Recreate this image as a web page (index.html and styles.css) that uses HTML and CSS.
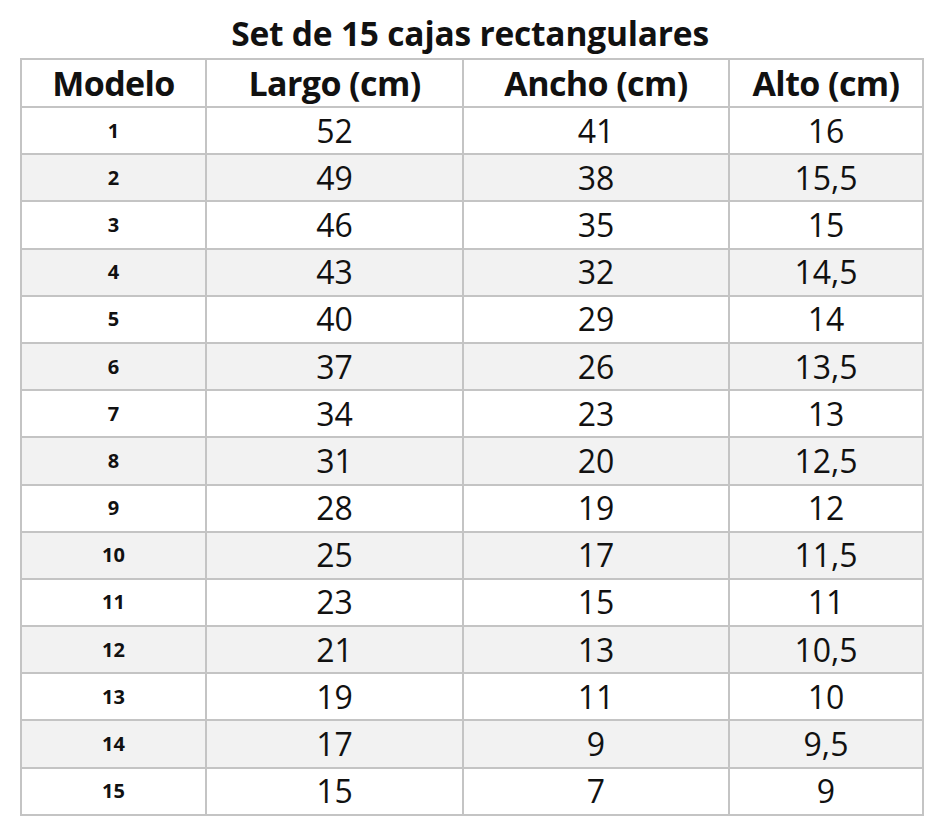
FILE: index.html
```html
<!DOCTYPE html>
<html lang="es">
<head>
<meta charset="utf-8">
<title>Set de 15 cajas rectangulares</title>
<link rel="stylesheet" href="styles.css">
</head>
<body>
<div class="page">
  <h1 class="title">Set de 15 cajas rectangulares</h1>
  <table class="sizes">
    <colgroup>
      <col class="c1"><col class="c2"><col class="c3"><col class="c4">
    </colgroup>
    <thead>
      <tr><th>Modelo</th><th>Largo (cm)</th><th>Ancho (cm)</th><th>Alto (cm)</th></tr>
    </thead>
    <tbody>
      <tr><td class="m">1</td><td>52</td><td>41</td><td>16</td></tr>
      <tr><td class="m">2</td><td>49</td><td>38</td><td>15,5</td></tr>
      <tr><td class="m">3</td><td>46</td><td>35</td><td>15</td></tr>
      <tr><td class="m">4</td><td>43</td><td>32</td><td>14,5</td></tr>
      <tr><td class="m">5</td><td>40</td><td>29</td><td>14</td></tr>
      <tr><td class="m">6</td><td>37</td><td>26</td><td>13,5</td></tr>
      <tr><td class="m">7</td><td>34</td><td>23</td><td>13</td></tr>
      <tr><td class="m">8</td><td>31</td><td>20</td><td>12,5</td></tr>
      <tr><td class="m">9</td><td>28</td><td>19</td><td>12</td></tr>
      <tr><td class="m">10</td><td>25</td><td>17</td><td>11,5</td></tr>
      <tr><td class="m">11</td><td>23</td><td>15</td><td>11</td></tr>
      <tr><td class="m">12</td><td>21</td><td>13</td><td>10,5</td></tr>
      <tr><td class="m">13</td><td>19</td><td>11</td><td>10</td></tr>
      <tr><td class="m">14</td><td>17</td><td>9</td><td>9,5</td></tr>
      <tr><td class="m">15</td><td>15</td><td>7</td><td>9</td></tr>
    </tbody>
  </table>
</div>
</body>
</html>
```
FILE: styles.css
```css
html, body {
  margin: 0;
  padding: 0;
  background: #ffffff;
}
.page {
  width: 940px;
  padding-top: 12px;
  font-family: "Open Sans", "Noto Sans", sans-serif;
  color: #111111;
}
.title {
  margin: 0;
  height: 46px;
  line-height: 42px;
  font-size: 33.5px;
  font-weight: 700;
  text-align: center;
  letter-spacing: -0.2px;
}
.sizes {
  margin-left: 20px;
  width: 902px;
  border-collapse: collapse;
  table-layout: fixed;
  border: 2px solid #c4c4c4;
}
.c1 { width: 185px; }
.c2 { width: 257px; }
.c3 { width: 266px; }
.c4 { width: 194px; }
.sizes th, .sizes td {
  border: 2px solid #c4c4c4;
  padding: 0;
  text-align: center;
  vertical-align: middle;
  line-height: 1;
}
.sizes th {
  height: 46px;
  font-size: 34px;
  font-weight: 700;
  letter-spacing: -0.6px;
}
.sizes td {
  height: 45.2px;
  font-size: 32px;
  font-weight: 400;
}
.sizes td.m {
  font-size: 20px;
  font-weight: 700;
}
.sizes tbody tr:nth-child(even) td {
  background: #f2f2f2;
}
```
